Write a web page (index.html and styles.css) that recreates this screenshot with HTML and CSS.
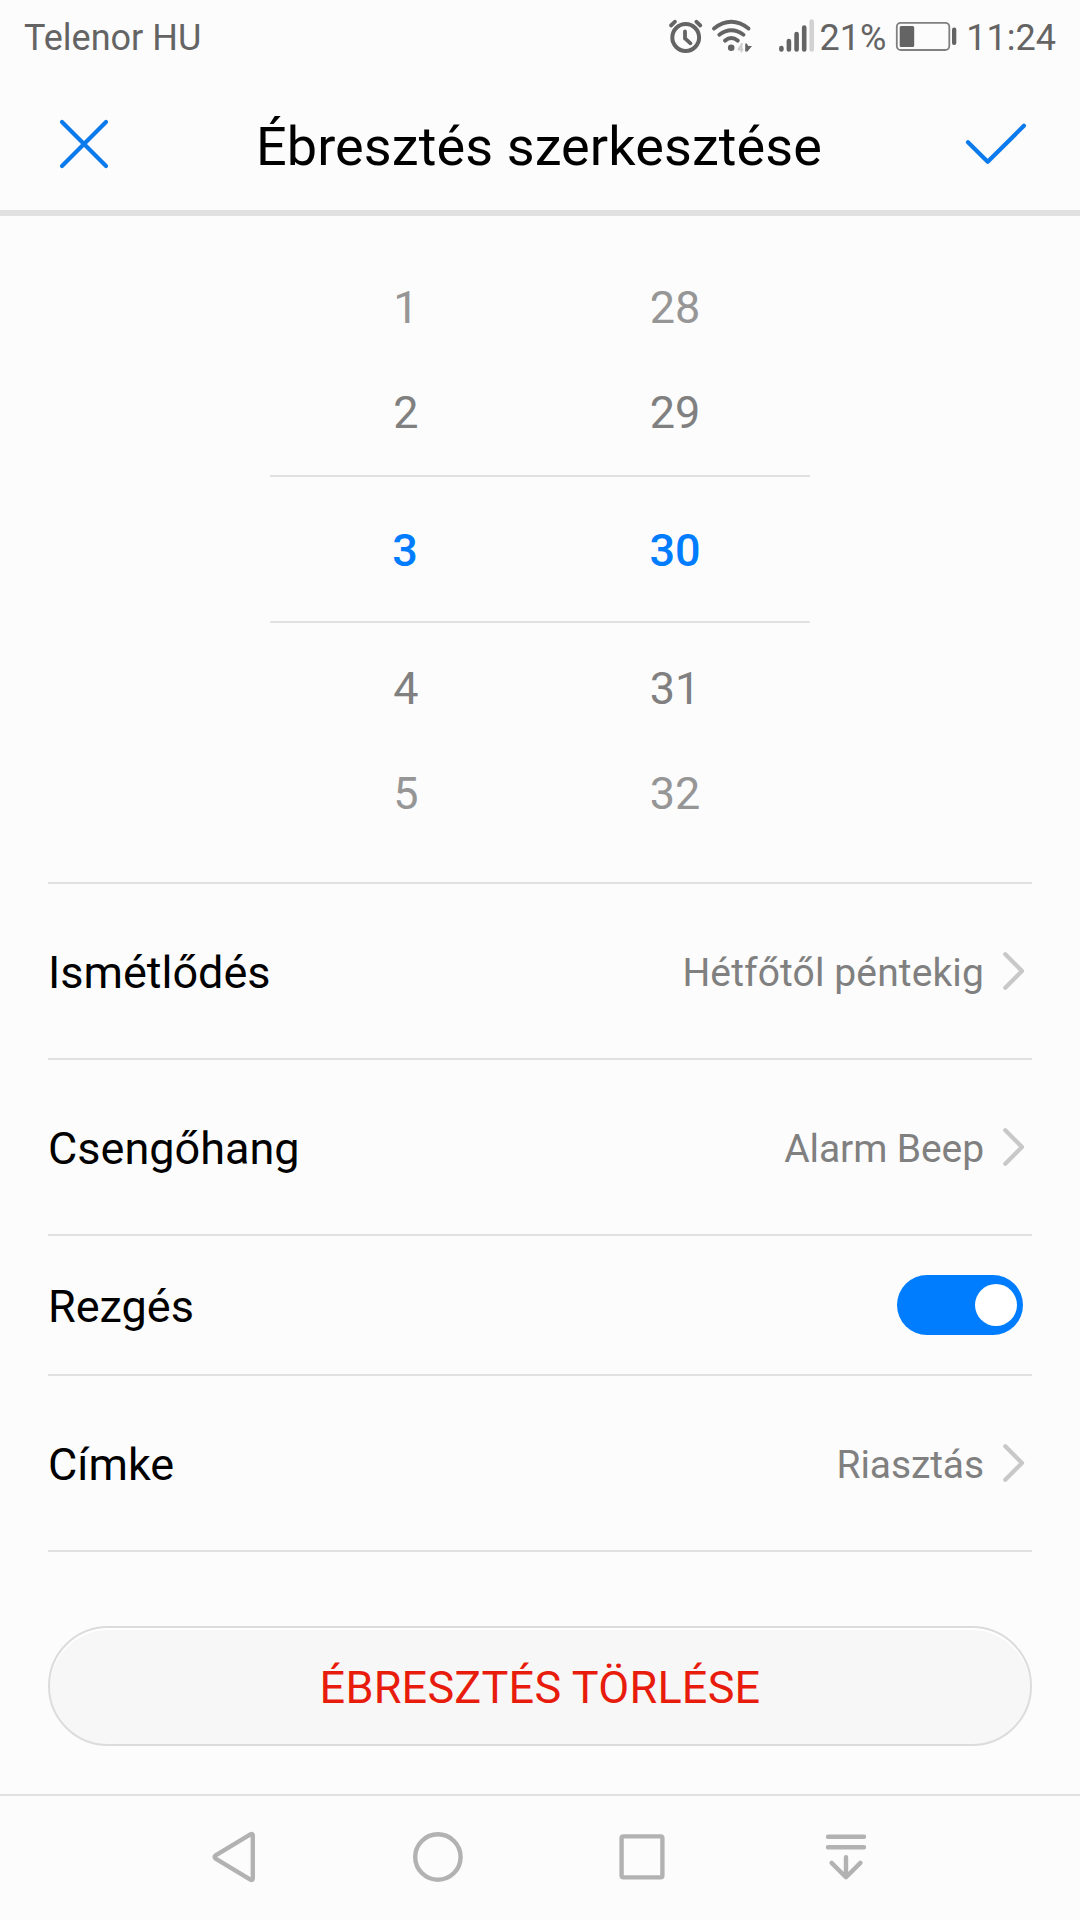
FILE: index.html
```html
<!DOCTYPE html>
<html lang="hu">
<head>
<meta charset="utf-8">
<title>Ébresztés szerkesztése</title>
<link rel="stylesheet" href="styles.css">
</head>
<body>
<div class="screen">
  <div class="status">
    <span class="carrier">Telenor HU</span>
    <svg class="status-icons" width="150" height="48" viewBox="664 12 150 48" fill="none" stroke="#646464" stroke-linecap="round">
      <circle cx="685.7" cy="37.5" r="13.4" stroke-width="4"/>
      <path d="M685 31.5v6.8l5.5 5M671 25.5l4-3.8M700.3 25.5l-4-3.8" stroke-width="3.8"/>
      <path d="M714 28.5Q731.3 15.2 748.5 28.5M719.3 34.7Q731.3 25.7 743.5 34.7M725 40.6Q731.3 35.6 737.8 40.6" stroke-width="3.9"/>
      <circle cx="731.2" cy="47.8" r="3.3" fill="#646464" stroke="none"/>
      <path d="M741.5 44v7.5M738.500 49l3.500-5M738.500 49.500h4" stroke="#ccc" stroke-width="1.800"/>
      <path d="M745.200 43.500h1.600l1.500 2.500h3.700l-4.500 5.500h-2.300z" fill="#646464" stroke="none"/>
      <path d="M781.4 48v1.5M788.9 41v8.5M796.6 34v15.5M804.2 27.5v22" stroke-width="4.6"/>
      <path d="M811.7 21.500v28" stroke="#d2d2d2" stroke-width="4.600"/>
    </svg>
    <span class="percent">21%</span>
    <svg class="battery" width="62" height="30" viewBox="895 21 62 30">
      <rect x="896.8" y="22.8" width="52.5" height="27.2" rx="4" fill="none" stroke="#808080" stroke-width="1.8"/>
      <rect x="899.7" y="26" width="14.5" height="21" rx="1.5" fill="#646464"/>
      <rect x="952" y="27.5" width="4.3" height="17.5" rx="2" fill="#646464"/>
    </svg>
    <span class="clock">11:24</span>
  </div>
  <header class="header">
    <svg width="60" height="60" viewBox="54 114 60 60" fill="none" stroke="#0a7aec" stroke-width="4.2" stroke-linecap="round"><path d="M62 122l44 44M106 122l-44 44"/></svg>
    <h1>Ébresztés szerkesztése</h1>
    <svg width="68" height="60" viewBox="962 114 68 60" fill="none" stroke="#0a7aec" stroke-width="4.2" stroke-linecap="round" stroke-linejoin="round"><path d="M968 142.3l19.7 19.5 36.2-36"/></svg>
  </header>
  <div class="picker">
    <div class="trow far"><span>1</span><span>28</span></div>
    <div class="trow near top"><span>2</span><span>29</span></div>
    <div class="trow current"><span>3</span><span>30</span></div>
    <div class="trow near bottom"><span>4</span><span>31</span></div>
    <div class="trow far"><span>5</span><span>32</span></div>
  </div>
  <div class="settings">
    <div class="row"><span class="label">Ismétlődés</span><span class="value wide">Hétfőtől péntekig</span><svg class="chev" width="24" height="40" viewBox="0 0 24 40"><path d="M3.3 3.2L20 20 3.3 36.8"/></svg></div>
    <div class="row"><span class="label">Csengőhang</span><span class="value">Alarm Beep</span><svg class="chev" width="24" height="40" viewBox="0 0 24 40"><path d="M3.3 3.2L20 20 3.3 36.8"/></svg></div>
    <div class="row short"><span class="label">Rezgés</span><span class="toggle"><span class="knob"></span></span></div>
    <div class="row"><span class="label">Címke</span><span class="value">Riasztás</span><svg class="chev" width="24" height="40" viewBox="0 0 24 40"><path d="M3.3 3.2L20 20 3.3 36.8"/></svg></div>
  </div>
  <button class="delete">ÉBRESZTÉS TÖRLÉSE</button>
  <nav class="nav">
    <svg width="56" height="60" viewBox="208 1827 56 60"><path d="M250.8 1834.2L215.6 1855.4Q213.6 1857 215.6 1858.6L250.8 1879.8Q252.8 1880.6 252.8 1878.2V1835.8Q252.8 1833.4 250.8 1834.2z"/></svg>
    <svg width="60" height="60" viewBox="408 1827 60 60"><circle cx="437.9" cy="1857" r="22.7"/></svg>
    <svg width="60" height="60" viewBox="612 1827 60 60"><rect x="621.6" y="1836.4" width="40.8" height="41" rx="1.8"/></svg>
    <svg width="60" height="60" viewBox="816 1827 60 60"><path d="M828 1836.7h36M828 1847.2h36M846 1857.3v19.5M831.6 1862.9l14.4 14.3 14.4-14.3"/></svg>
  </nav>
</div>
</body>
</html>
```
FILE: styles.css
```css
* { box-sizing: border-box; }
body {
  margin: 0;
  background: #fcfcfc;
  color: #000;
  font-family: Roboto, sans-serif;
}
svg { display: block; flex: none; }
.screen {
  width: 1080px;
  height: 1920px;
  display: flex;
  flex-direction: column;
}
.status {
  height: 72px;
  padding: 0 24px;
  display: flex;
  align-items: center;
  color: #646464;
  font-size: 36px;
}
.status span { padding-top: 4px; }
.carrier { margin-right: auto; }
.percent { margin: 0 8.5px 0 6px; }
.clock { margin-left: 9.4px; }
.header {
  height: 144px;
  padding: 6px 50px 0 54px;
  border-bottom: 6px solid #e1e1e1;
  display: flex;
  align-items: center;
  justify-content: space-between;
}
.header h1 {
  margin: 6px 0 0;
  font-size: 54px;
  font-weight: 400;
  line-height: 64px;
  letter-spacing: 0.1px;
  padding-left: 2px;
}
.picker {
  width: 540px;
  height: 666px;
  margin: 0 auto;
  padding-top: 39px;
  font-size: 45px;
}
.trow {
  height: 105px;
  display: grid;
  grid-template-columns: 1fr 1fr;
  text-align: center;
  line-height: 105px;
}
.far { color: #969696; }
.near { color: #808080; }
.far span:first-child,
.near span:first-child { padding-left: 2px; }
.near.top { height: 115px; }
.near.bottom { height: 118px; padding-top: 13px; }
.current {
  height: 148px;
  border-top: 2px solid #e1e1e1;
  border-bottom: 2px solid #e1e1e1;
  color: #007dff;
  font-weight: 500;
  line-height: 148px;
}
.settings {
  margin: 0 48px;
  border-top: 2px solid #e1e1e1;
}
.row {
  height: 176px;
  border-bottom: 2px solid #e1e1e1;
  display: flex;
  align-items: center;
}
.short { height: 140px; }
.label { margin-right: auto; padding-top: 3px; font-size: 45px; }
.value {
  margin-right: 18px;
  padding-top: 3px;
  color: #808080;
  font-size: 39px;
  letter-spacing: -0.1px;
}
.value.wide { letter-spacing: 0.12px; }
.chev {
  margin-right: 6px;
  fill: none;
  stroke: #c8c8c8;
  stroke-width: 4.2;
  stroke-linecap: round;
  stroke-linejoin: round;
}
.toggle {
  width: 126px;
  height: 60px;
  margin-right: 9px;
  padding: 0 6px;
  border-radius: 30px;
  background: #007dff;
  display: flex;
  align-items: center;
  justify-content: flex-end;
}
.knob {
  width: 42px;
  height: 42px;
  border-radius: 50%;
  background: #fff;
}
.delete {
  height: 120px;
  margin: 74px 48px 48px;
  padding: 3px 0 0;
  border: 2px solid #dcdcdc;
  border-radius: 60px;
  background: #f7f7f7;
  box-shadow: inset 0 2px 0 #fff;
  color: #e81c0c;
  font: 400 45px Roboto, sans-serif;
  letter-spacing: 0.22px;
}
.nav {
  height: 126px;
  padding: 0 204px 2px 208px;
  border-top: 2px solid #e1e1e1;
  display: flex;
  align-items: center;
  justify-content: space-between;
}
.nav svg {
  fill: none;
  stroke: #b2b2b2;
  stroke-width: 4.4;
  stroke-linecap: round;
  stroke-linejoin: round;
}
```
